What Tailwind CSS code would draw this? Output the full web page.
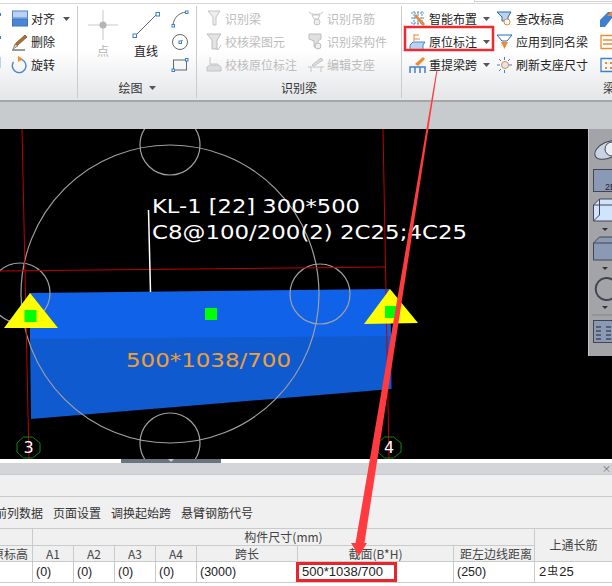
<!DOCTYPE html>
<html lang="zh-CN">
<head>
    <meta charset="UTF-8">
    <title>原位标注</title>
    <script src="https://cdn.jsdelivr.net/npm/@tailwindcss/browser@4"></script>
</head>
<body class="bg-white">
<div class="relative w-[612px] h-[586px] overflow-hidden flex flex-col text-[12px] text-[#222] [font-family:'Noto_Sans_CJK_SC',sans-serif]">

    <!-- ribbon -->
    <header class="relative h-[102px] shrink-0 flex pt-[3px] bg-gradient-to-b from-white via-white to-[#e4e6e8] border-b-2 border-[#a4a6a8]">
        <div class="absolute top-0 left-[474px] right-0 h-[2px] border-l border-b border-[#d0d0d0]"></div>
        <div class="w-full flex border-t border-[#d8d8d8] pt-[2px] h-[95px]">

            <!-- edit group -->
            <section class="w-[78px] shrink-0 h-[92px] pt-px border-r border-[#c9cbcd]">
                <div class="h-[23px] flex items-center gap-[3px]">
                    <svg class="w-[28px] h-[18px]" viewBox="0 0 28 18"><path d="M0 3h1v3H0z" fill="#3f7fd0"/><rect x="12.5" y="1" width="15" height="7" fill="#b8d2f0" stroke="#4a86d0"/><rect x="12.5" y="9" width="15" height="7" fill="#4a86d8" stroke="#3a70b8"/></svg>
                    <span>对齐</span>
                    <svg class="w-[7px] h-[4px] ml-[5px]" viewBox="0 0 7 4"><path d="M0 0h7L3.500 4z" fill="#555"/></svg>
                </div>
                <div class="h-[23px] flex items-center gap-[3px]">
                    <svg class="w-[28px] h-[18px]" viewBox="0 0 28 18"><path d="M0 3h1v3H0z" fill="#3f7fd0"/><path d="M14 14l2-4 9-8 2 2-9 8z" fill="#a8703a" stroke="#7a4a20" stroke-width=".7"/><path d="M13 16l2-5 3 2z" fill="#e8c8a0" stroke="#555" stroke-width=".5"/><path d="M12 17h13" stroke="#333"/></svg>
                    <span>删除</span>
                </div>
                <div class="h-[23px] flex items-center gap-[3px]">
                    <svg class="w-[28px] h-[18px]" viewBox="0 0 28 18"><path d="M0 1h1v11H0z" fill="#b8d2f0"/><path d="M19 3a6.800 6.800 0 1 1-5.500 3" fill="none" stroke="#4a86d0" stroke-width="1.400"/><path d="M18 0l5 3-5 3z" fill="#f09020"/></svg>
                    <span>旋转</span>
                </div>
            </section>

            <!-- draw group -->
            <section class="w-[119px] shrink-0 h-[92px] flex flex-col border-r border-[#c9cbcd]">
                <div class="flex">
                    <div class="w-[50px] flex flex-col items-center text-[#b4b4b4]">
                        <svg class="w-[30px] h-[30px] mt-[4px]" viewBox="0 0 30 30"><path d="M0 15h30M15 0v30" stroke="#c8c8c8"/><circle cx="15" cy="15" r="3.500" fill="#b4b4b4"/></svg>
                        <span class="mt-[2px]">点</span>
                    </div>
                    <div class="w-[36px] flex flex-col items-center">
                        <svg class="w-[30px] h-[30px] mt-[4px]" viewBox="0 0 30 30"><path d="M4 26L26 4" stroke="#666"/><rect x="2" y="24" width="3.500" height="3.500" fill="#fff" stroke="#3f7fd0"/><rect x="25" y="2.500" width="3.500" height="3.500" fill="#fff" stroke="#3f7fd0"/></svg>
                        <span class="mt-[2px]">直线</span>
                    </div>
                    <div class="w-[32px] flex flex-col items-center pt-px">
                        <div class="h-[23px] flex items-center"><svg class="w-[18px] h-[18px]" viewBox="0 0 18 18"><path d="M2 15C3 7 8 3 15 2" fill="none" stroke="#666"/><rect x="1" y="14.500" width="2.500" height="2.500" fill="#fff" stroke="#3f7fd0"/><rect x="14.500" y="1" width="2.500" height="2.500" fill="#fff" stroke="#3f7fd0"/></svg></div>
                        <div class="h-[23px] flex items-center"><svg class="w-[18px] h-[18px]" viewBox="0 0 18 18"><circle cx="9" cy="9" r="7.500" fill="none" stroke="#666"/><path d="M9 9l3-2" stroke="#888"/><rect x="8" y="8" width="2.500" height="2.500" fill="#fff" stroke="#3f7fd0"/></svg></div>
                        <div class="h-[23px] flex items-center"><svg class="w-[18px] h-[18px]" viewBox="0 0 18 18"><rect x="2.500" y="4" width="13" height="10" fill="none" stroke="#666"/><rect x="1" y="13" width="2.500" height="2.500" fill="#fff" stroke="#3f7fd0"/><rect x="14.500" y="2.500" width="2.500" height="2.500" fill="#fff" stroke="#3f7fd0"/></svg></div>
                    </div>
                </div>
                <div class="mt-auto h-[20px] flex items-center justify-center gap-[6px] text-[#333]">
                    <span>绘图</span>
                    <svg class="w-[7px] h-[4px]" viewBox="0 0 7 4"><path d="M0 0h7L3.500 4z" fill="#555"/></svg>
                </div>
            </section>

            <!-- recognise beam group -->
            <section class="w-[205px] shrink-0 h-[92px] flex flex-col border-r border-[#c9cbcd]">
                <div class="flex text-[#bcbcbc] pt-px">
                    <div class="w-[102px]">
                        <div class="h-[23px] flex items-center gap-[3px] pl-[9px]"><svg class="w-[16px] h-[18px]" viewBox="0 0 16 18"><path d="M2 1h12l-4 6v8H7V7z" fill="#eee" stroke="#c4c4c4"/></svg><span>识别梁</span></div>
                        <div class="h-[23px] flex items-center gap-[3px] pl-[9px]"><svg class="w-[16px] h-[18px]" viewBox="0 0 16 18"><path d="M1 1h14l-4 6v9H6V7z" fill="#e4e4e4" stroke="#bcbcbc"/><path d="M9 15l3 2 3-5" fill="none" stroke="#c4c4c4"/></svg><span>校核梁图元</span></div>
                        <div class="h-[23px] flex items-center gap-[3px] pl-[9px]"><svg class="w-[16px] h-[18px]" viewBox="0 0 16 18"><path d="M4 1v7h8" fill="none" stroke="#c4c4c4"/><path d="M1 11l3-2h9l2 2v4H1z" fill="#dcdcdc" stroke="#c4c4c4"/></svg><span>校核原位标注</span></div>
                    </div>
                    <div>
                        <div class="h-[23px] flex items-center gap-[3px] pl-[9px]"><svg class="w-[16px] h-[18px]" viewBox="0 0 16 18"><path d="M1 2c1 3 13 3 14 0M4 5h8l-2 4H6z" fill="none" stroke="#c4c4c4"/><circle cx="9" cy="12" r="3" fill="#eee" stroke="#c4c4c4"/></svg><span>识别吊筋</span></div>
                        <div class="h-[23px] flex items-center gap-[3px] pl-[9px]"><svg class="w-[16px] h-[18px]" viewBox="0 0 16 18"><path d="M1 1h12v5l-3 2v6H6V8L1 6z" fill="#e0e0e0" stroke="#bcbcbc"/><circle cx="10" cy="13" r="3" fill="#eee" stroke="#bcbcbc"/></svg><span>识别梁构件</span></div>
                        <div class="h-[23px] flex items-center gap-[3px] pl-[9px]"><svg class="w-[16px] h-[18px]" viewBox="0 0 16 18"><path d="M4 9l9-7 2 2-9 6z" fill="#ddd" stroke="#c4c4c4"/><path d="M0 11h16M3 11v5M13 11v5" stroke="#c4c4c4"/></svg><span>编辑支座</span></div>
                    </div>
                </div>
                <div class="mt-auto h-[20px] flex items-center justify-center text-[#333]">识别梁</div>
            </section>

            <!-- beam edit group -->
            <section class="flex-1 h-[92px] flex flex-col overflow-hidden">
                <div class="flex pt-px">
                    <div class="w-[92px] shrink-0">
                        <div class="h-[23px] flex items-center gap-[3px] pl-[7px]">
                            <svg class="w-[17px] h-[18px] shrink-0" viewBox="0 0 17 18"><path d="M2 3h13M2 8h13M2 13h13M5 1v15M9 1v15M13 1v15" stroke="#4a90d9" stroke-dasharray="2 1"/><path d="M7 4l9 10-2 2-9-10z" fill="#e88a3a"/></svg>
                            <span>智能布置</span>
                            <svg class="w-[7px] h-[4px] ml-[3px]" viewBox="0 0 7 4"><path d="M0 0h7L3.500 4z" fill="#555"/></svg>
                        </div>
                        <div class="h-[23px] flex items-center gap-[3px] pl-[7px]">
                            <svg class="w-[17px] h-[18px] shrink-0" viewBox="0 0 17 18"><path d="M5 1v7M5 2h5M5 6h6" fill="none" stroke="#e88a3a"/><path d="M1 12l3-3h12l-2 3v5H1z" fill="#b8d2f0" stroke="#4a86d0"/></svg>
                            <span>原位标注</span>
                            <svg class="w-[7px] h-[4px] ml-[3px]" viewBox="0 0 7 4"><path d="M0 0h7L3.500 4z" fill="#555"/></svg>
                        </div>
                        <div class="h-[23px] flex items-center gap-[3px] pl-[7px]">
                            <svg class="w-[17px] h-[18px] shrink-0" viewBox="0 0 17 18"><path d="M6 8l8-7 2 2-7 7z" fill="#f08a30"/><path d="M1 17v-6h15v6M6 11v6M11 11v6" fill="none" stroke="#3f7fd0" stroke-width="1.500"/></svg>
                            <span>重提梁跨</span>
                            <svg class="w-[7px] h-[4px] ml-[3px]" viewBox="0 0 7 4"><path d="M0 0h7L3.500 4z" fill="#555"/></svg>
                        </div>
                    </div>
                    <div class="w-[106px] shrink-0">
                        <div class="h-[23px] flex items-center gap-[3px] pl-[2px]"><svg class="w-[17px] h-[18px] shrink-0" viewBox="0 0 17 18"><path d="M1 2h14l-3 5v4H6V7z" fill="#b8d2f0" stroke="#2a6ab0"/><circle cx="11" cy="12" r="3" fill="#fff" stroke="#e88a3a"/></svg><span>查改标高</span></div>
                        <div class="h-[23px] flex items-center gap-[3px] pl-[2px]"><svg class="w-[17px] h-[18px] shrink-0" viewBox="0 0 17 18"><path d="M1 2h15l-5 6H6z" fill="#fff" stroke="#2a6ab0"/><path d="M5 9h7l-3.500 7z" fill="#f08a30"/></svg><span>应用到同名梁</span></div>
                        <div class="h-[23px] flex items-center gap-[3px] pl-[2px]"><svg class="w-[17px] h-[18px] shrink-0" viewBox="0 0 17 18"><path d="M1 9h3M13 9h3M8.500 1v3M8.500 14v3M3 3l2 2M14 3l-2 2M3 15l2-2" stroke="#3f7fd0"/><circle cx="9" cy="9" r="3.500" fill="#dce8f5" stroke="#e88a3a"/></svg><span>刷新支座尺寸</span></div>
                    </div>
                    <div class="shrink-0">
                        <div class="h-[23px] flex items-center"><svg class="w-[12px] h-[18px]" viewBox="0 0 12 18"><path d="M0 10l8-8h4v6L5 17H0z" fill="#3f7fd0"/><path d="M7 6l5-5v5z" fill="#f08a30"/></svg></div>
                        <div class="h-[23px] flex items-center"><svg class="w-[12px] h-[18px]" viewBox="0 0 12 18"><path d="M12 2.500H1v13h11M3 7h9M3 11h9" fill="none" stroke="#f08a30" stroke-width="1.300"/></svg></div>
                        <div class="h-[23px] flex items-center"><svg class="w-[12px] h-[18px]" viewBox="0 0 12 18"><path d="M12 2.500H1v13h11" fill="none" stroke="#3f7fd0" stroke-width="1.300"/><path d="M5 6h2v2H5zM10 6h2v2h-2zM5 11h2v2H5zM10 11h2v2h-2z" fill="#f08a30"/></svg></div>
                    </div>
                </div>
                <div class="mt-auto h-[20px] flex items-center pl-[201px] text-[#333]">梁</div>
            </section>
        </div>
    </header>

    <!-- tab strip -->
    <div class="h-[27px] shrink-0 bg-[#c8cbce]"></div>

    <!-- drawing canvas -->
    <main class="relative h-[330px] shrink-0 bg-black overflow-hidden">
        <svg class="absolute inset-0 w-[612px] h-[330px]" viewBox="0 129 612 330">
            <polygon points="30,335 391,332 391.500,389 31,419" fill="#105ad0"/>
            <polygon points="30,293 390,289 391,336 30,339" fill="#1062e8"/>
            <g fill="none" stroke="#a0a0a0" stroke-width="1.200">
                <circle cx="170" cy="294" r="149"/>
                <circle cx="170" cy="145" r="30"/>
                <circle cx="20" cy="293" r="30"/>
                <circle cx="320" cy="294" r="30"/>
                <circle cx="170" cy="443" r="30"/>
            </g>
            <g stroke="#c00000" stroke-width="1">
                <path d="M22 129L29 459"/>
                <path d="M383 129L389 459"/>
                <path d="M0 271L385 267"/>
            </g>
            <path d="M148.500 210L150.500 292" stroke="#fff" stroke-width="1.500"/>
            <polygon points="30,293 4,328 58,328" fill="#ffff00"/>
            <polygon points="390,289 364,324 418,323" fill="#ffff00"/>
            <rect x="24.500" y="310" width="12" height="12" fill="#00ff00"/>
            <rect x="205" y="308" width="12" height="12" fill="#00ff00"/>
            <rect x="385" y="306" width="12" height="12" fill="#00ff00"/>
            <g class="[font-family:'DejaVu_Sans',sans-serif]">
                <text x="152" y="213" fill="#fff" font-size="20" textLength="208" lengthAdjust="spacingAndGlyphs">KL-1 [22] 300*500</text>
                <text x="152" y="239" fill="#fff" font-size="20" textLength="315" lengthAdjust="spacingAndGlyphs">C8@100/200(2) 2C25;4C25</text>
                <text x="126" y="367" fill="#f0a030" font-size="20" textLength="165" lengthAdjust="spacingAndGlyphs">500*1038/700</text>
            </g>
            <polygon points="23.500,437 32.500,437 40,443 40,452 32.500,458 23.500,458 17,452 17,443" fill="none" stroke="#0a8a0a"/>
            <polygon points="384.500,437 393.500,437 401,443 401,452 393.500,458 384.500,458 378,452 378,443" fill="none" stroke="#0a8a0a"/>
            <g class="[font-family:'DejaVu_Sans',sans-serif]" fill="#fff" font-size="16" text-anchor="middle">
                <text x="28.500" y="453">3</text>
                <text x="389" y="453">4</text>
            </g>
        </svg>

        <!-- view toolbar -->
        <aside class="absolute right-0 top-0 w-[24px] h-[227px] bg-[#a2a4a7] border-l border-[#c4c6c8] overflow-hidden">
            <svg class="w-[24px] h-[227px]" viewBox="588 129 24 227">
                <ellipse cx="607" cy="150" rx="14" ry="8" fill="#c8d4e4" stroke="#445" transform="rotate(-25 607 150)"/>
                <circle cx="611" cy="149" r="7" fill="#e8eef4" stroke="#445"/>
                <rect x="592.500" y="169.500" width="30" height="22" fill="#8a9ab5" stroke="#445"/>
                <text x="604" y="190" font-size="9" fill="#223" class="[font-family:'Liberation_Sans',sans-serif]">2D</text>
                <path d="M592.500 205l6-6h20v22h-26zM592.500 205h20M598.500 199v16l-6 6" fill="#d0e4fc" stroke="#445"/>
                <path d="M601 228h6l-3 3z" fill="#333"/>
                <path d="M592.500 243l6-6h20v23h-26z" fill="#8a9ab5" stroke="#445"/>
                <path d="M592.500 243h20v17" fill="none" stroke="#445"/>
                <path d="M601 267h6l-3 3z" fill="#333"/>
                <path d="M612 280a11 11 0 1 0 0 18" fill="none" stroke="#445" stroke-width="2"/>
                <path d="M601 306h6l-3 3z" fill="#333"/>
                <path d="M591 315h21" stroke="#80848a"/>
                <rect x="592.500" y="320.500" width="30" height="22" fill="#8a9ab5" stroke="#445"/>
                <path d="M595 327h5M595 331h5M595 335h5M595 339h5M605 327h5M605 331h5M605 335h5M605 339h5" stroke="#223" stroke-width="1.200"/>
            </svg>
        </aside>
    </main>

    <!-- splitter -->
    <div class="h-[4px] shrink-0 bg-white">
        <div class="w-[100px] ml-[121px] h-[4px] bg-[#6b7580] flex justify-center"><svg class="w-[6px] h-[3px]" viewBox="0 0 6 3"><path d="M0 0h6L3 3z" fill="#c8ccd0"/></svg></div>
    </div>

    <!-- property panel -->
    <div class="h-[11px] shrink-0 bg-[#d3d5d9] flex items-center justify-end text-[9px] leading-none text-[#666] pr-px">×</div>
    <div class="h-[23px] shrink-0 bg-[#f0f0f0] border-y border-[#c8cacc]"></div>
    <div class="h-[32px] shrink-0 bg-[#f0f0f0] flex items-center text-[#333] border-b border-[#c8cacc] overflow-hidden">
        <span class="ml-[-5px] w-[48px] shrink-0 whitespace-nowrap flex justify-end">当前列数据</span>
        <span class="ml-[10px]">页面设置</span>
        <span class="ml-[10px]">调换起始跨</span>
        <span class="ml-[10px]">悬臂钢筋代号</span>
    </div>

    <div class="grid flex-1 grid-cols-[33px_41px_41px_41px_41px_101px_156px_81px_78px] grid-rows-[17px_16px_21px] text-[#444] [&>*]:border-r [&>*]:border-b [&>*]:border-[#c8cacc] [&>*]:flex [&>*]:items-center">
        <div class="bg-[#f0f0f0]"></div>
        <div class="col-span-7 bg-[#f0f0f0] justify-center">构件尺寸(mm)</div>
        <div class="row-span-2 bg-[#f0f0f0] justify-center">上通长筋</div>

        <div class="bg-[#f0f0f0] justify-end pr-[4px] overflow-hidden whitespace-nowrap">原标高</div>
        <div class="bg-[#f0f0f0] justify-center">A1</div>
        <div class="bg-[#f0f0f0] justify-center">A2</div>
        <div class="bg-[#f0f0f0] justify-center">A3</div>
        <div class="bg-[#f0f0f0] justify-center">A4</div>
        <div class="bg-[#f0f0f0] justify-center">跨长</div>
        <div class="bg-[#f0f0f0] justify-center">截面(B*H)</div>
        <div class="bg-[#f0f0f0] justify-end pr-[2px]">距左边线距离</div>

        <div class="bg-white"></div>
        <div class="bg-white pl-[3px] text-[#222] [font-family:'Liberation_Sans',sans-serif] text-[12.500px]">(0)</div>
        <div class="bg-white pl-[3px] text-[#222] [font-family:'Liberation_Sans',sans-serif] text-[12.500px]">(0)</div>
        <div class="bg-white pl-[3px] text-[#222] [font-family:'Liberation_Sans',sans-serif] text-[12.500px]">(0)</div>
        <div class="bg-white pl-[3px] text-[#222] [font-family:'Liberation_Sans',sans-serif] text-[12.500px]">(0)</div>
        <div class="bg-white pl-[3px] text-[#222] [font-family:'Liberation_Sans',sans-serif] text-[12.500px]">(3000)</div>
        <div class="bg-white pl-[4px] text-[#222] [font-family:'Liberation_Sans',sans-serif] text-[13px]">500*1038/700</div>
        <div class="bg-white pl-[3px] text-[#222] [font-family:'Liberation_Sans',sans-serif] text-[12.500px]">(250)</div>
        <div class="bg-white pl-[4px] text-[#222] [font-family:'Liberation_Sans',sans-serif] text-[13px]">2<span class="mx-px [font-family:'Noto_Sans_CJK_SC',sans-serif] text-[11px] leading-none mb-[3px]">虫</span>25</div>
    </div>

    <!-- red annotation over the whole shot -->
    <svg class="absolute inset-0 w-[612px] h-[586px] pointer-events-none" viewBox="0 0 612 586">
        <rect x="405" y="27" width="88" height="23" fill="none" stroke="#ee2a2f" stroke-width="2.500"/>
        <rect x="297.500" y="563.500" width="98" height="17" fill="none" stroke="#e8252b" stroke-width="3"/>
        <polygon points="436.500,70 437.500,70 364,546 355,546" fill="#ff3b40"/>
        <polygon points="351,543 367,543 359,556" fill="#ff3b40"/>
    </svg>
</div>
</body>
</html>
